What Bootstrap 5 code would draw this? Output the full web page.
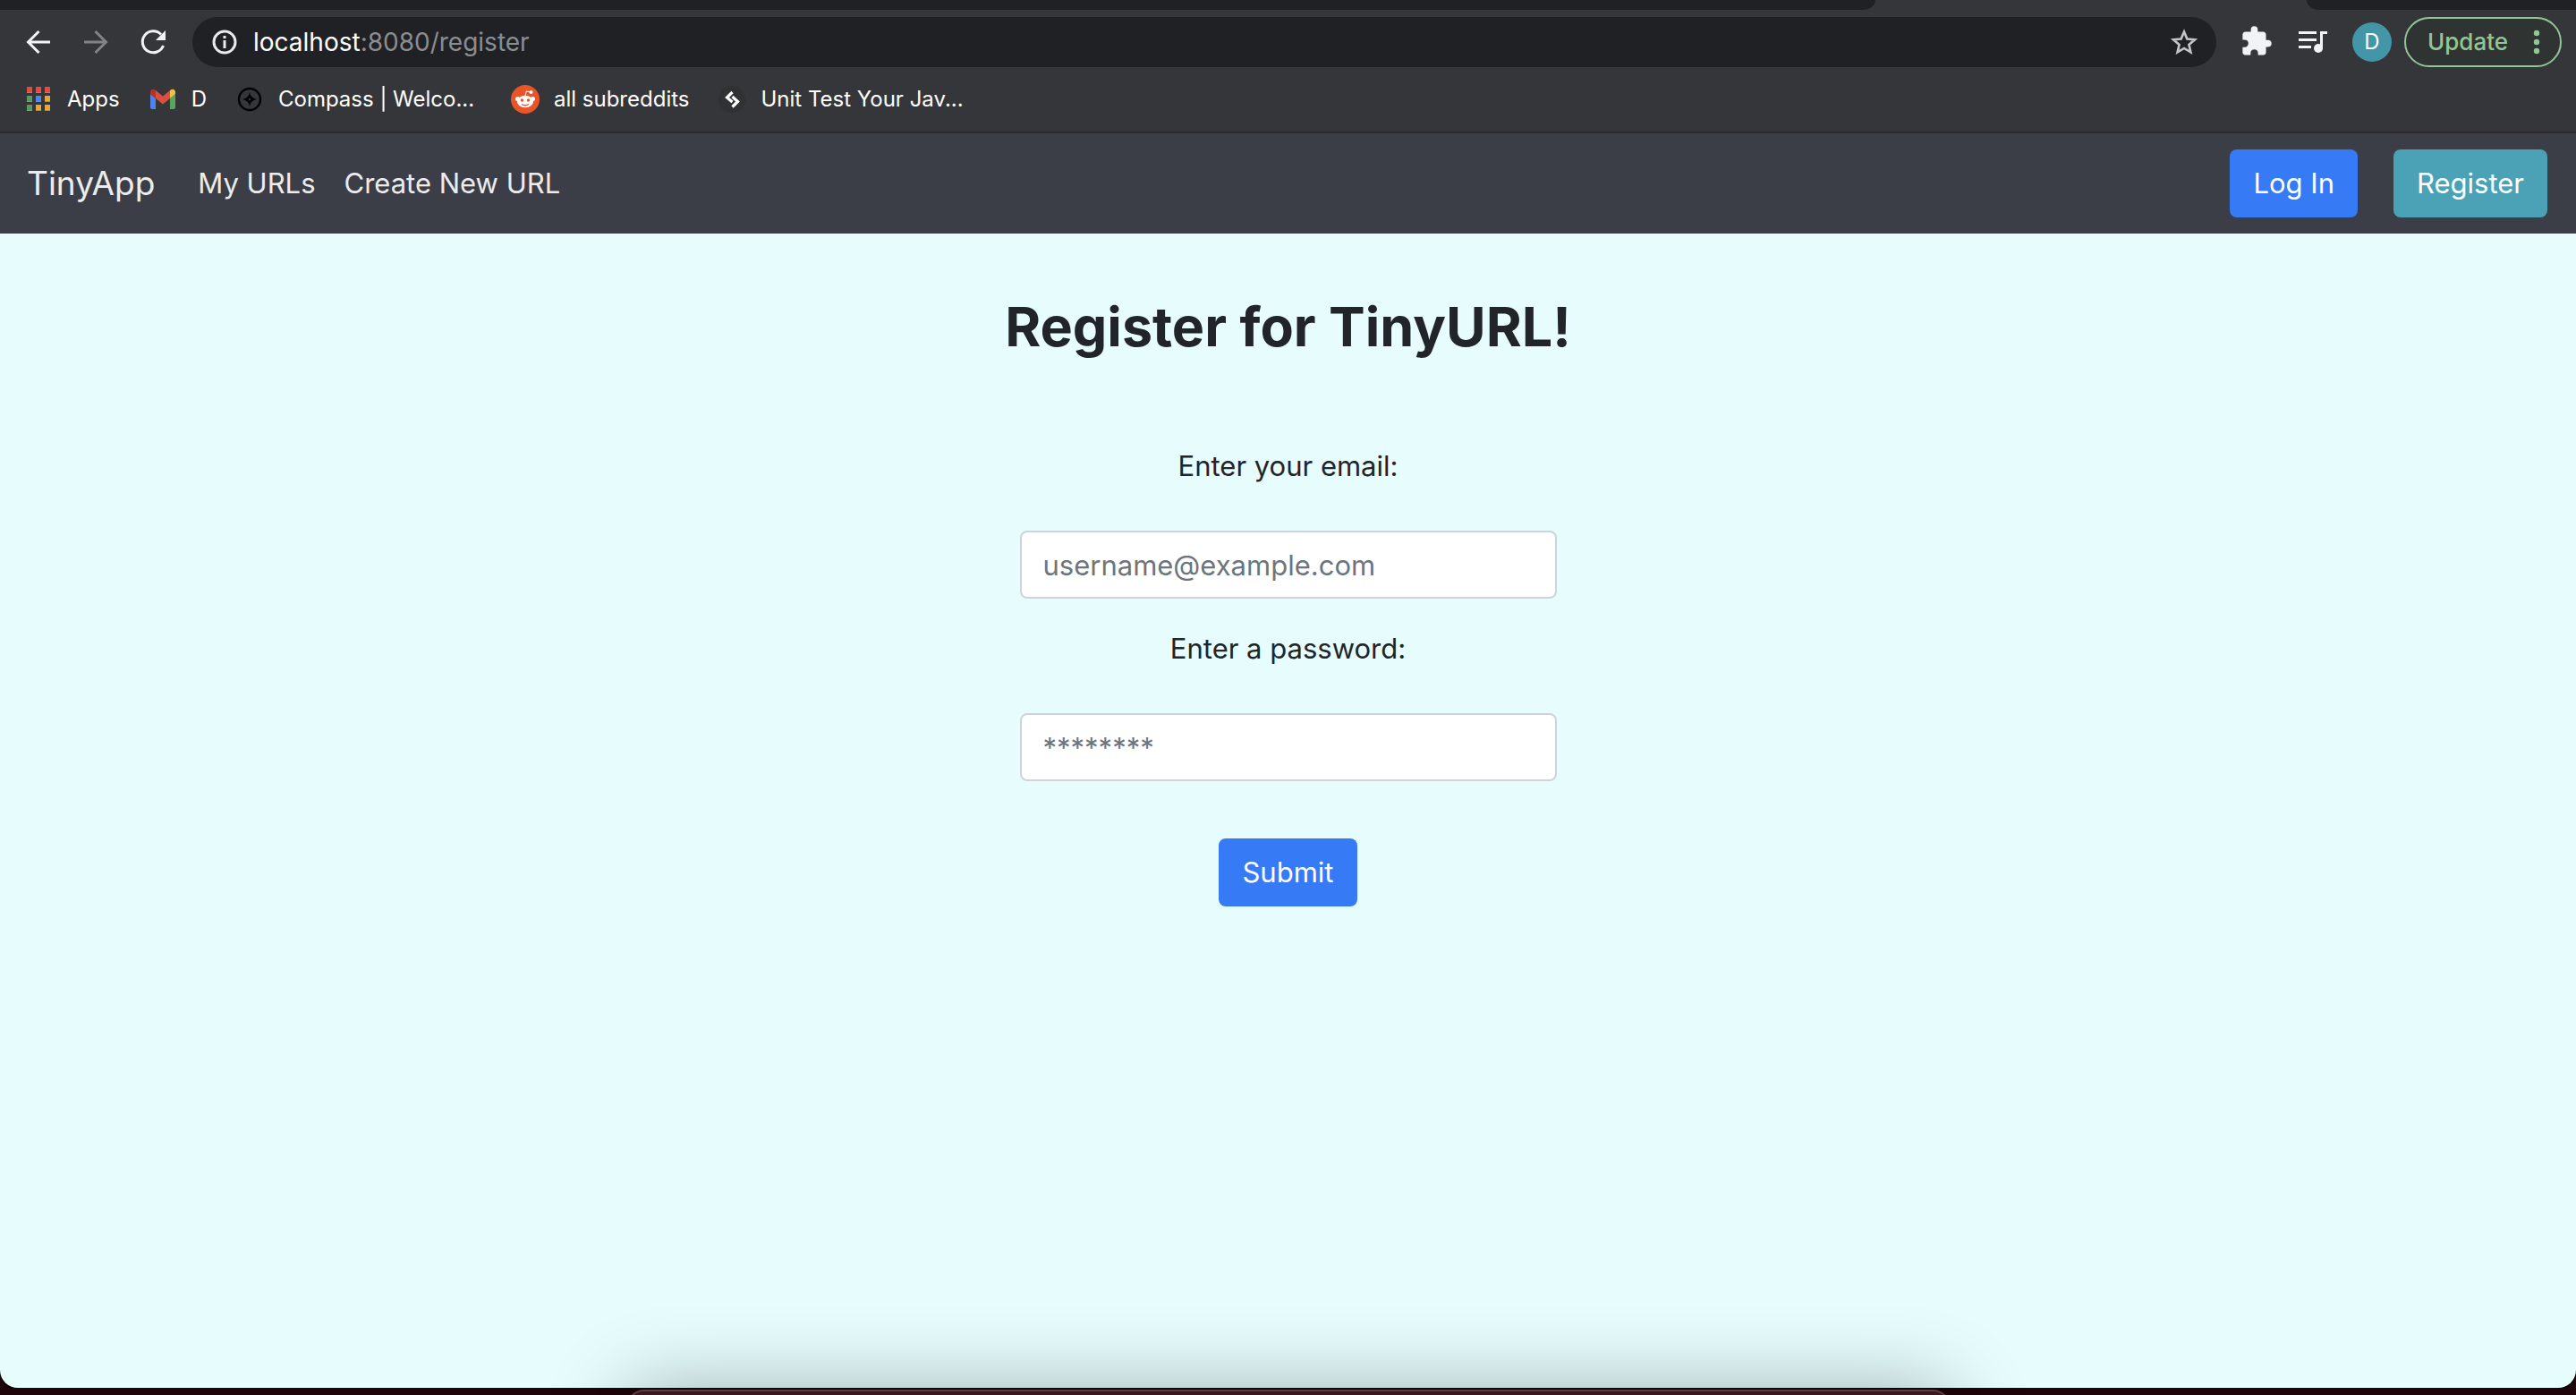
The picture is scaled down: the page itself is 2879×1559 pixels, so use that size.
<!DOCTYPE html>
<html lang="en">
<head>
<meta charset="utf-8">
<meta name="viewport" content="width=device-width, initial-scale=1">
<title>TinyApp</title>
<link href="https://cdn.jsdelivr.net/npm/bootstrap@5.3.0/dist/css/bootstrap.min.css" rel="stylesheet">
<style>
  body { background: #1f0409; font-family: Inter, "Liberation Sans", sans-serif; font-size: 31px; line-height: 48px; color: #212529; }
  a { text-decoration: none; }
  button { font-family: inherit; }
  svg { display: block; flex: none; }
  .window { min-height: calc(100vh - 8px); background: #e6fcfd; border-radius: 0 0 20px 20px; box-shadow: 0 2px 0 #000; overflow: hidden; }
  .chrome { background: #35363a; border-bottom: 2px solid #292a2b; }
  .tabstrip { height: 11px; }
  .tabs-left { flex: 1 1 2096px; background: #202124; border-bottom-right-radius: 14px 11px; }
  .tab-active { flex: 0 0 482px; }
  .tabs-right { flex: 0 1 301px; background: #202124; border-bottom-left-radius: 14px 11px; }
  .toolbar { padding: 8px 16px 0 23px; }
  .tool { width: 40px; height: 40px; padding: 0; border: 0; background: none; color: #f1f3f4; }
  .address { height: 56px; border-radius: 28px; background: #202124; padding: 0 16px; margin: 0 24px; color: #e8eaed; }
  .url { font-size: 28px; color: #8b8d90; }
  .url b { font-weight: 400; color: #fff; }
  .avatar { width: 44px; height: 44px; border-radius: 50%; background: #4296a8; color: #fff; font-size: 24px; line-height: 44px; border: 0; padding: 0; }
  .update { width: 176px; height: 56px; border: 2px solid #91c798; border-radius: 28px; background: #2f3332; color: #91c798; font-size: 26px; font-weight: 500; padding: 0 22px 0 24px; margin-left: 14px; }
  .bookmarks { padding: 16px 27px; height: 72px; gap: 32px; font-size: 24px; line-height: 40px; white-space: nowrap; }
  .bookmarks a { color: #fff; }
  .bookmark-long { min-width: 276px; }
  .appbar { background: #3b3e46; padding: 18px 32px 18px 30px; }
  .appbar .navbar-brand { font-size: 37px; line-height: 60px; color: #ececed; padding: 0; margin: 0 48px 0 0; }
  .appbar .nav-link { color: #ececed; padding: 0; }
  .links { gap: 32px; }
  .actions { gap: 40px; }
  .btn { font-size: 31px; line-height: 48px; padding: 12px 24px; border: 2px solid transparent; border-radius: 8px; color: #fff; }
  .btn-main { background: #367af6; }
  .btn-teal { background: #4ba1b5; }
  .title { font-size: 61px; line-height: 76px; font-weight: 700; margin: 66px 0 94px; }
  .field { width: 600px; max-width: 100%; margin-bottom: 32px; }
  .field label { margin-bottom: 48px; }
  .field .form-control { font-size: 31px; line-height: 48px; height: 76px; padding: 12px 24px; border: 2px solid #ced4da; border-radius: 8px; }
  .field .form-control::placeholder { color: #6c757d; }
  .submit { margin-top: 32px; }
  .dock { position: fixed; left: 50%; bottom: -114px; width: 1480px; max-width: 100%; height: 120px; transform: translateX(-50%); background: #3a1820; border: 2px solid #5c3b42; border-radius: 20px; box-shadow: 0 0 90px rgba(0,0,0,.3); }
</style>
<script src="https://cdn.jsdelivr.net/npm/bootstrap@5.3.0/dist/js/bootstrap.bundle.min.js"></script>
</head>
<body>
<div class="window">
  <header class="chrome">
    <div class="tabstrip d-flex"><div class="tabs-left"></div><div class="tab-active"></div><div class="tabs-right"></div></div>
    <div class="toolbar d-flex align-items-center">
      <div class="d-flex gap-4">
        <button class="tool" aria-label="Back"><svg width="40" height="40" viewBox="0 0 40 40" fill="none" stroke="currentColor" stroke-width="3"><path d="M33 20H9M20.500 8 8.500 20l12 12"/></svg></button>
        <button class="tool" aria-label="Forward"><svg width="40" height="40" viewBox="0 0 40 40" fill="none" stroke="#828385" stroke-width="3"><path d="M7 20h24M19.500 8l12 12-12 12"/></svg></button>
        <button class="tool" aria-label="Reload"><svg width="40" height="40" viewBox="0 0 40 40" fill="none" stroke="currentColor" stroke-width="3"><path d="M31.500 24A12 12 0 1 1 29 11.500"/><path d="M34 7v11H23z" fill="currentColor" stroke="none"/></svg></button>
      </div>
      <div class="address d-flex align-items-center flex-grow-1">
        <svg width="40" height="40" viewBox="0 0 40 40" fill="none" stroke="currentColor" stroke-width="3"><circle cx="20" cy="20" r="12"/><path d="M20 18v9M20 13v3"/></svg>
        <span class="url ms-2 flex-grow-1 px-1"><b>localhost</b>:8080/register</span>
        <button class="tool" aria-label="Bookmark this page"><svg width="40" height="40" viewBox="0 0 40 40" fill="none" stroke="#c4c5c7" stroke-width="2.600"><path d="M20 8.500l3.400 8 8.600.700-6.600 5.700 2 8.500-7.400-4.500-7.400 4.500 2-8.500L8 17.200l8.600-.700z"/></svg></button>
      </div>
      <div class="d-flex align-items-center">
        <button class="tool me-4" aria-label="Extensions"><svg width="40" height="40" viewBox="-1.500 -.500 26 26" fill="currentColor"><path d="M20.500 11H19V7c0-1.100-.900-2-2-2h-4V3.500a2.500 2.500 0 0 0-5 0V5H4c-1.100 0-2 .900-2 2v3.800h1.500a2.700 2.700 0 0 1 0 5.400H2V20c0 1.100.900 2 2 2h3.800v-1.500a2.700 2.700 0 0 1 5.400 0V22H17c1.100 0 2-.900 2-2v-4h1.500a2.500 2.500 0 0 0 0-5z"/></svg></button>
        <button class="tool me-4" aria-label="Media"><svg width="40" height="40" viewBox="0 0 40 40" fill="none" stroke="currentColor" stroke-width="3"><path d="M4 9.500h20M4 17.500h20M4 25.500h14M29.500 27V9.500H36"/><circle cx="26" cy="27" r="5" fill="currentColor" stroke="none"/></svg></button>
        <button class="avatar" aria-label="Profile">D</button>
        <button class="update d-flex align-items-center justify-content-between">Update<svg width="8" height="28" viewBox="0 0 8 28" fill="currentColor"><circle cx="4" cy="4" r="3.200"/><circle cx="4" cy="14" r="3.200"/><circle cx="4" cy="24" r="3.200"/></svg></button>
      </div>
    </div>
    <nav class="bookmarks d-flex align-items-center" aria-label="Bookmarks">
      <a href="#" class="d-flex align-items-center gap-3"><svg width="32" height="32" viewBox="0 0 32 32"><path fill="#e34b3f" d="M3 2h6v6H3zM13 2h6v6h-6zM23 2h6v6h-6z"/><path fill="#539c5c" d="M3 12h6v6H3zM3 22h6v6H3z"/><path fill="#4788ee" d="M13 12h6v6h-6z"/><path fill="#e5a739" d="M23 12h6v6h-6zM13 22h6v6h-6zM23 22h6v6h-6z"/><path fill="#8e8f91" d="M3 8h6v1H3zM13 8h6v1h-6zM23 8h6v1h-6zM3 18h6v1H3zM13 18h6v1h-6zM23 18h6v1h-6zM3 28h6v1H3zM13 28h6v1h-6zM23 28h6v1h-6z"/></svg>Apps</a>
      <a href="#" class="d-flex align-items-center gap-3"><svg width="32" height="32" viewBox="0 0 32 32"><path fill="#4f83ec" d="M2 10l6 5v12H4a2 2 0 0 1-2-2z"/><path fill="#58a65c" d="M24 15l6-5v15a2 2 0 0 1-2 2h-4z"/><path fill="#b4342c" d="M2 8c0-3 3-4.500 6-2v9l-6-5z"/><path fill="#f1c141" d="M30 8c0-3-3-4.500-6-2v9l6-5z"/><path fill="#d95040" d="M8 6l8 6.500L24 6v9l-8 6.500L8 15z"/></svg>D</a>
      <a href="#" class="bookmark-long d-flex align-items-center gap-3"><svg width="32" height="32" viewBox="0 0 32 32"><circle cx="16" cy="16" r="12" fill="none" stroke="#000" stroke-width="2.400"/><path d="M16 8q.8 6.500 8 8-7.200 1.500-8 8-.8-6.500-8-8 7.200-1.500 8-8z"/><circle cx="16" cy="16" r="1.200" fill="#35363a"/></svg>Compass | Welco...</a>
      <a href="#" class="d-flex align-items-center gap-3"><svg width="32" height="32" viewBox="0 0 32 32"><circle cx="16" cy="16" r="16" fill="#ea5528"/><g fill="#fff"><ellipse cx="16" cy="18.500" rx="9" ry="6.700"/><circle cx="7.500" cy="15.500" r="2.500"/><circle cx="24.500" cy="15.500" r="2.500"/><circle cx="22.500" cy="8" r="2"/></g><path d="M16 12l1.300-5 5 1" fill="none" stroke="#fff"/><g fill="#ea5528"><circle cx="12.500" cy="17" r="1.700"/><circle cx="19.500" cy="17" r="1.700"/></g><path d="M12 21.500q4 2.500 8 0" fill="none" stroke="#ea5528" stroke-width="1.300"/></svg>all subreddits</a>
      <a href="#" class="d-flex align-items-center gap-3"><svg width="32" height="32" viewBox="0 0 32 32"><circle cx="16" cy="16" r="15" fill="#303132"/><path d="M16.500 8l-6 6 6 5M16.500 13l6 5.500-6 6" fill="none" stroke="#fff" stroke-width="3.200"/></svg>Unit Test Your Jav...</a>
    </nav>
  </header>
  <nav class="appbar d-flex align-items-center" aria-label="Main">
    <a class="navbar-brand" href="#">TinyApp</a>
    <div class="links d-flex me-auto"><a class="nav-link" href="#">My URLs</a><a class="nav-link" href="#">Create New URL</a></div>
    <div class="actions d-flex">
      <button class="btn btn-main" type="button">Log In</button>
      <button class="btn btn-teal" type="button">Register</button>
    </div>
  </nav>
  <main class="container-fluid text-center">
    <h1 class="title">Register for TinyURL!</h1>
    <form class="d-flex flex-column align-items-center">
      <div class="field"><label for="email">Enter your email:</label><input class="form-control" id="email" type="email" placeholder="username@example.com"></div>
      <div class="field"><label for="password">Enter a password:</label><input class="form-control" id="password" type="password" placeholder="********"></div>
      <button class="btn btn-main submit" type="submit">Submit</button>
    </form>
  </main>
</div>
<div class="dock"></div>
</body>
</html>
